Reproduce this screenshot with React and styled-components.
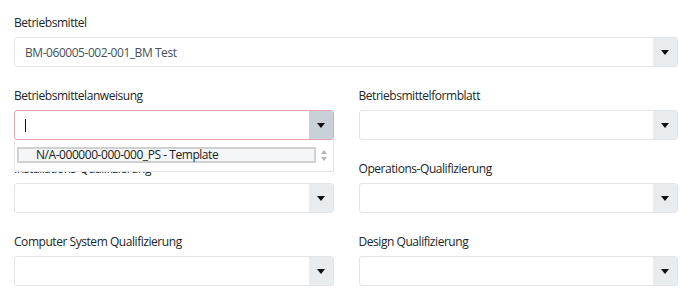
import React from "react";
import styled, { createGlobalStyle } from "styled-components";

const GlobalStyle = createGlobalStyle`
  body {
    margin: 0;
    background: #ffffff;
    font-family: "Open Sans", "Noto Sans", sans-serif;
    color: #212529;
  }
`;

export default function App() {
  return (
    <>
      <GlobalStyle />
      <Page>
        <Group>
          <Label>Betriebsmittel</Label>
          <SelectBox>
            <Value>BM-060005-002-001_BM Test</Value>
            <ArrowButton>
              <Caret />
            </ArrowButton>
          </SelectBox>
        </Group>

        <Columns>
          <Group>
            <Label>Betriebsmittelanweisung</Label>
            <SelectBox $focused>
              <Value>
                <Cursor />
              </Value>
              <ArrowButton $focused>
                <Caret />
              </ArrowButton>
            </SelectBox>
            {/* open list of the focused select */}
            <Dropdown>
              <OptionRow>N/A-000000-000-000_PS - Template</OptionRow>
              <Spinner>
                <SpinUp />
                <SpinDown />
              </Spinner>
            </Dropdown>
          </Group>
          <Group>
            <Label>Betriebsmittelformblatt</Label>
            <EmptySelect />
          </Group>

          <Group>
            <Label>Installations-Qualifizierung</Label>
            <EmptySelect />
          </Group>
          <Group>
            <Label>Operations-Qualifizierung</Label>
            <EmptySelect />
          </Group>

          <Group>
            <Label>Computer System Qualifizierung</Label>
            <EmptySelect />
          </Group>
          <Group>
            <Label>Design Qualifizierung</Label>
            <EmptySelect />
          </Group>
        </Columns>
      </Page>
    </>
  );
}

function EmptySelect() {
  return (
    <SelectBox>
      <Value />
      <ArrowButton>
        <Caret />
      </ArrowButton>
    </SelectBox>
  );
}

const Page = styled.div`
  padding: 14px 12px 0 14px;
`;

const Columns = styled.div`
  display: grid;
  grid-template-columns: 1fr 1fr;
  column-gap: 25px;
`;

const Group = styled.div`
  position: relative;
  margin-bottom: 20px;
`;

const Label = styled.div`
  font-size: 12px;
  line-height: 18px;
  letter-spacing: -0.45px;
  margin-bottom: 5px;
  color: #212529;
`;

const SelectBox = styled.div`
  display: flex;
  height: 30px;
  box-sizing: border-box;
  border: 1px solid ${(p) => (p.$focused ? "#e5a4a9" : "#e1e4e8")};
  border-radius: 3px;
  overflow: hidden;
  background: #ffffff;
`;

const Value = styled.div`
  flex: 1;
  display: flex;
  align-items: center;
  padding-left: 10px;
  font-size: 12px;
  letter-spacing: -0.45px;
  color: #495057;
`;

const Cursor = styled.span`
  display: block;
  width: 1px;
  height: 13px;
  background: #111111;
`;

const ArrowButton = styled.div`
  width: 24px;
  display: flex;
  align-items: center;
  justify-content: center;
  background: ${(p) => (p.$focused ? "#c9d0d8" : "#e9ecef")};
`;

const Caret = styled.span`
  width: 0;
  height: 0;
  border-left: 4px solid transparent;
  border-right: 4px solid transparent;
  border-top: 5px solid #111111;
`;

const Dropdown = styled.div`
  position: absolute;
  left: 0;
  right: 0;
  top: 53px;
  height: 32px;
  box-sizing: border-box;
  border: 1px solid #e1e4e8;
  border-top: none;
  background: #ffffff;
  display: flex;
  align-items: flex-start;
  padding: 7px 4px 0 2px;
  gap: 4px;
  z-index: 5;
`;

const OptionRow = styled.div`
  flex: 1;
  height: 16px;
  box-sizing: border-box;
  border: 2px solid #d0d0d0;
  background: #f5f6f8;
  padding-left: 17px;
  font-size: 12px;
  line-height: 12px;
  color: #222222;
  letter-spacing: -0.45px;
`;

const Spinner = styled.div`
  width: 9px;
  display: flex;
  flex-direction: column;
  align-items: center;
  gap: 3px;
  padding-top: 3px;
`;

const SpinUp = styled.span`
  width: 0;
  height: 0;
  border-left: 3px solid transparent;
  border-right: 3px solid transparent;
  border-bottom: 4px solid #b5b5b5;
`;

const SpinDown = styled.span`
  width: 0;
  height: 0;
  border-left: 3px solid transparent;
  border-right: 3px solid transparent;
  border-top: 4px solid #b5b5b5;
`;
